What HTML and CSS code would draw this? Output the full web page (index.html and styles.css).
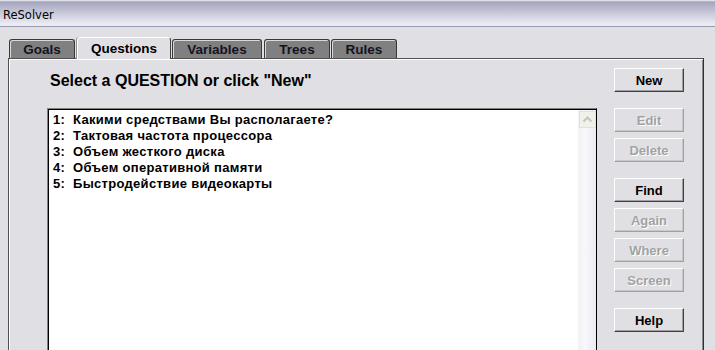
FILE: index.html
```html
<!DOCTYPE html>
<html lang="ru">
<head>
    <meta charset="UTF-8">
    <title>ReSolver</title>
    <link rel="stylesheet" href="styles.css">
</head>
<body>
    <div class="window">
        <div class="titlebar">ReSolver</div>

        <!-- Tabs -->
        <div class="tabs">
            <div class="tab tab-goals">Goals</div>
            <div class="tab tab-questions active">Questions</div>
            <div class="tab tab-variables">Variables</div>
            <div class="tab tab-trees">Trees</div>
            <div class="tab tab-rules">Rules</div>
        </div>

        <div class="panel">
            <div class="main">
                <h2 class="heading">Select a QUESTION or click "New"</h2>
                <div class="listbox">
                    <ul class="items">
                        <li>1:&nbsp; Какими средствами Вы располагаете?</li>
                        <li>2:&nbsp; Тактовая частота процессора</li>
                        <li>3:&nbsp; Объем жесткого диска</li>
                        <li>4:&nbsp; Объем оперативной памяти</li>
                        <li>5:&nbsp; Быстродействие видеокарты</li>
                    </ul>
                    <div class="scrollbar">
                        <div class="scroll-up">
                            <svg width="15" height="15" viewBox="0 0 15 15">
                                <path d="M3.5 9.5 L7.5 5.5 L11.5 9.5" fill="none" stroke="#c4c4c4" stroke-width="2"/>
                            </svg>
                        </div>
                    </div>
                </div>
            </div>

            <div class="buttons">
                <button class="btn">New</button>
                <button class="btn group" disabled>Edit</button>
                <button class="btn" disabled>Delete</button>
                <button class="btn group">Find</button>
                <button class="btn" disabled>Again</button>
                <button class="btn" disabled>Where</button>
                <button class="btn" disabled>Screen</button>
                <button class="btn group">Help</button>
            </div>
        </div>
    </div>
</body>
</html>
```

FILE: styles.css
```css
body {
    margin: 0;
    padding: 0;
    width: 715px;
    height: 350px;
    overflow: hidden;
    background-color: #e0dfe3;
    font-family: "Liberation Sans", Arial, sans-serif;
}
.window {
    display: flex;
    flex-direction: column;
    height: 100%;
}
.titlebar {
    height: 26px;
    line-height: 31px;
    padding-left: 3px;
    border-bottom: 1px solid #9a9ab2;
    background: linear-gradient(#f4f4f8 0px, #a4a4bd 2px, #bcbcd0 9px, #ebebf2 24px);
    font-family: "DejaVu Sans", Tahoma, sans-serif;
    font-size: 11.5px;
    color: #000;
}

/* Tabs */
.tabs {
    display: flex;
    align-items: flex-end;
    height: 21px;
    margin-top: 10px;
    padding-left: 9px;
}
.tab {
    height: 18px;
    line-height: 19px;
    text-align: center;
    font-size: 13.5px;
    font-weight: bold;
    color: #141420;
    background-color: #808080;
    border: 1px solid #383838;
    border-bottom: none;
    border-radius: 3px 3px 0 0;
    box-shadow: inset 1px 1px 0 #d8d8d8;
}
.tab-goals { width: 64px; margin-right: 2px; }
.tab-questions { width: 92px; }
.tab-variables { width: 88px; margin-left: 1px; margin-right: 2px; }
.tab-trees { width: 64px; margin-right: 1px; }
.tab-rules { width: 64px; }
.tab.active {
    height: 21px;
    line-height: 22px;
    margin-bottom: -1px;
    position: relative;
    z-index: 1;
    color: #000;
    background-color: #e0dfe3;
    border-color: #fff #404040 #fff #fff;
    box-shadow: -1px 0 0 #909090;
}

/* Panel */
.panel {
    display: flex;
    flex: 1;
    min-height: 0;
    margin-left: 8px;
    width: 694px;
    border-top: 1px solid #505050;
    border-left: 1px solid #505050;
    border-right: 1px solid #303030;
    box-shadow: inset 1px 1px 0 #fff, inset -1px 0 0 #8a8a8a;
}
.main {
    display: flex;
    flex-direction: column;
    width: 550px;
    margin-left: 38px;
}
.heading {
    margin: 12px 0 0 3px;
    height: 20px;
    line-height: 20px;
    font-size: 16px;
    font-weight: bold;
    color: #000;
}
.listbox {
    display: flex;
    flex: 1;
    margin-top: 17px;
    background-color: #fff;
    border-top: 1px solid #808080;
    border-left: 1px solid #808080;
    box-shadow: inset 1px 1px 0 #000;
    border-right: 1px solid #000;
    padding: 1px 0 0 1px;
}
.items {
    flex: 1;
    list-style: none;
    margin: 0;
    padding: 2px 0 0 4px;
}
.items li {
    height: 16px;
    line-height: 16px;
    font-size: 13px;
    font-weight: bold;
    letter-spacing: 0.3px;
    color: #000;
    white-space: pre;
}
.scrollbar {
    width: 18px;
    background: linear-gradient(to right, #f2f2f5, #f8f8fb 40%, #e8ebf3);
}
.scroll-up {
    width: 15px;
    height: 15px;
    margin: 1px 0 0 1px;
    background-color: #f1f1ec;
    border: 1px solid #e2e2da;
}
.scroll-up svg {
    display: block;
}

/* Buttons */
.buttons {
    display: flex;
    flex-direction: column;
    gap: 6px;
    margin-left: 17px;
    padding-top: 9px;
    width: 70px;
}
.btn {
    height: 24px;
    padding: 0;
    font-family: "Liberation Sans", Arial, sans-serif;
    font-size: 13px;
    font-weight: bold;
    color: #000;
    background-color: #e0dfe3;
    border: 1px solid;
    border-color: #fff #404040 #404040 #fff;
    box-shadow: inset -1px -1px 0 #a0a0a0;
}
.btn.group {
    margin-top: 10px;
}
.btn:disabled {
    color: #a2a2a2;
    text-shadow: 1px 1px 0 #fff;
    border-color: #fff #a0a0a0 #a0a0a0 #fff;
    box-shadow: inset -1px -1px 0 #c8c8c8;
}
```
